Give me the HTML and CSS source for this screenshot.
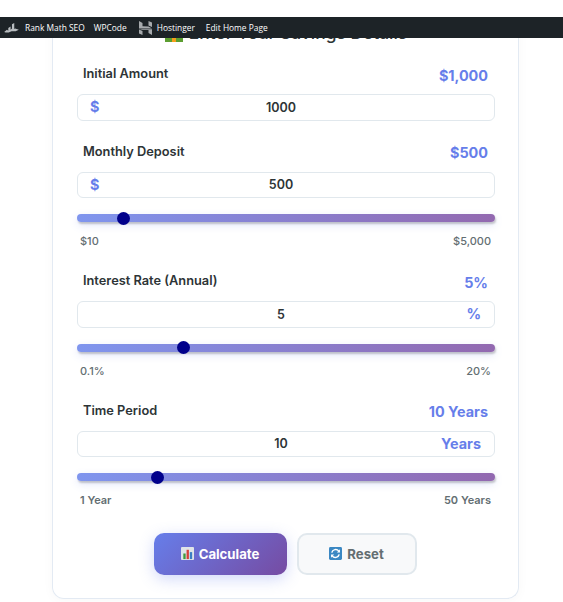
FILE: index.html
```html
<!DOCTYPE html>
<html lang="en">
<head>
<meta charset="utf-8">
<title>Savings Calculator</title>
<link rel="stylesheet" href="styles.css">
</head>
<body>
<header class="adminbar">
  <nav class="adminbar__inner">
    <svg class="adminbar__logo" viewBox="0 0 16 12" width="15" height="11"><path d="M0 11 3 8.5 4.5 9.5V6.5L7 5v3.5L8.5 7V2.5L11 1v6.5L12 7l4 1.5-3.5 1.5H8L5 11.5H1.5z" fill="#b9bdc0"/></svg>
    <a class="adminbar__link">Rank Math SEO</a>
    <a class="adminbar__link adminbar__link--wp">WPCode</a>
    <svg class="adminbar__h" viewBox="0 0 13 14" width="13" height="14"><path d="M0 0 3.5 2V5.3L9.5 5.5 13 7.5H0zM9.5 0 13 1.5V6L9.5 4.5zM0 8.5 3.5 10V14L0 12.5zM0 8.3H13V14L9.5 12V9H3.5z" fill="#a7aaad"/></svg>
    <a class="adminbar__link">Hostinger</a>
    <a class="adminbar__link adminbar__link--edit">Edit Home Page</a>
  </nav>
</header>
<main class="card">
  <h2 class="card__title">
    <svg class="card__emoji" viewBox="0 0 18 18" width="18" height="18"><rect width="18" height="18" fill="#5c9e31"/><rect x="7" y="10" width="4" height="8" fill="#f59e1b"/></svg>
    Enter Your Savings Details
  </h2>

  <section class="field field--first">
    <div class="field__head"><label class="field__label">Initial Amount</label><span class="field__value">$1,000</span></div>
    <div class="entry"><span class="entry__unit entry__unit--left">$</span><input class="entry__input" type="text" value="1000"></div>
  </section>

  <section class="field field--deposit">
    <div class="field__head"><label class="field__label">Monthly Deposit</label><span class="field__value">$500</span></div>
    <div class="entry"><span class="entry__unit entry__unit--left">$</span><input class="entry__input" type="text" value="500"></div>
    <input class="slider" type="range" min="10" max="5000" value="500">
    <div class="scale"><span>$10</span><span>$5,000</span></div>
  </section>

  <section class="field">
    <div class="field__head"><label class="field__label">Interest Rate (Annual)</label><span class="field__value">5%</span></div>
    <div class="entry"><input class="entry__input" type="text" value="5"><span class="entry__unit entry__unit--right">%</span></div>
    <input class="slider" type="range" min="0.1" max="20" step="0.1" value="5">
    <div class="scale"><span>0.1%</span><span>20%</span></div>
  </section>

  <section class="field">
    <div class="field__head"><label class="field__label">Time Period</label><span class="field__value">10 Years</span></div>
    <div class="entry"><input class="entry__input" type="text" value="10"><span class="entry__unit entry__unit--right">Years</span></div>
    <input class="slider" type="range" min="1" max="50" value="10">
    <div class="scale scale--strong"><span>1 Year</span><span>50 Years</span></div>
  </section>

  <div class="actions">
    <button class="btn btn--primary" type="button">
      <svg viewBox="0 0 14 14" width="13" height="13"><rect width="14" height="14" rx="1" fill="#dfe5e8"/><rect x="2.5" y="7" width="2.5" height="6" fill="#3f9a3f"/><rect x="6" y="3" width="2.5" height="10" fill="#d9413a"/><rect x="9.5" y="5.5" width="2.5" height="7.5" fill="#3b7fc4"/></svg>
      Calculate
    </button>
    <button class="btn btn--ghost" type="button">
      <svg viewBox="0 0 14 14" width="13" height="13"><rect width="14" height="14" rx="1.5" fill="#3b88c3"/><path d="M3 6A4.2 4.2 0 0 1 10.5 4.5M11 8A4.2 4.2 0 0 1 3.5 9.5" fill="none" stroke="#fff" stroke-width="1.6"/><path d="M11.8 2.5V6H8.5zM2.2 11.5V8H5.5z" fill="#fff"/></svg>
      Reset
    </button>
  </div>
</main>
</body>
</html>
```
FILE: styles.css
```css
* { box-sizing: border-box; }
html, body { margin: 0; background: #fff; }
body { font-family: Inter, "Liberation Sans", sans-serif; color: #2d3436; height: 602px; overflow: hidden; }

.adminbar { position: absolute; top: 0; left: 0; right: 0; height: 38px; padding-top: 17px; background: #fff; z-index: 5; }
.adminbar__inner { display: flex; align-items: center; height: 21px; background: #1d2327; padding-left: 4px; font: 8.4px/21px "Open Sans", "Liberation Sans", sans-serif; color: #fff; }
.adminbar__logo { margin-right: 6px; }
.adminbar__link--wp { margin-left: 9px; }
.adminbar__h { margin: 0 5px 0 12px; }
.adminbar__link--edit { margin-left: 11px; }

.card { width: 467px; margin: 0 0 0 52px; padding: 20px 23px 22px 24px; height: 599px; border: 1px solid #e3eaf3; border-top: 0; border-radius: 12px; box-shadow: 0 2px 12px rgba(0, 0, 0, .03); }
.card__title { margin: 0; display: flex; justify-content: center; align-items: center; gap: 6px; height: 26px; font-size: 17.4px; font-weight: 500; line-height: 26px; }

.field { margin-top: 21px; }
.field--first { margin-top: 16px; }
.field--deposit { margin-top: 19px; }
.field__head { display: flex; justify-content: space-between; align-items: flex-end; padding: 0 7px 0 6px; height: 24px; margin-bottom: 8px; }
.field__label { font-size: 12.8px; font-weight: 600; line-height: 16px; margin-bottom: 4px; color: #2d3436; }
.field__value { font-size: 14.4px; font-weight: 700; line-height: 20px; margin-bottom: .5px; color: #667eea; }
.entry { position: relative; height: 26.5px; }
.entry__input { display: block; width: 100%; height: 100%; padding: 0 15px 0 5px; border: 1px solid #e1e8ed; border-radius: 6px; background: #fff; font: 600 12.5px Inter, sans-serif; color: #2d3436; text-align: center; }
.entry__unit { position: absolute; top: calc(50% - 1px); transform: translateY(-50%); font-size: 14.4px; font-weight: 700; color: #667eea; }
.entry__unit--left { left: 13px; }
.entry__unit--right { right: 14px; }

.slider { display: block; appearance: none; -webkit-appearance: none; width: 100%; height: 8px; margin: 16px 0 0; border-radius: 4px; background: linear-gradient(90deg, #7f95ee, #9268b0); box-shadow: 1px 2px 2px rgba(0,0,0,.2), 0 3px 8px rgba(102,126,234,.2); }
.slider::-webkit-slider-thumb { -webkit-appearance: none; appearance: none; width: 13px; height: 13px; border-radius: 50%; background: #00008b; border: 0; }

.scale { display: flex; justify-content: space-between; padding: 0 4px 0 3px; margin-top: 12px; font-size: 11px; font-weight: 500; line-height: 14px; color: #636e72; }
.scale--strong { font-weight: 600; }

.actions { display: flex; justify-content: center; gap: 10px; margin-top: 25.5px; padding-right: 2px; }
.btn { display: flex; align-items: center; justify-content: center; gap: 5px; height: 42px; border-radius: 10px; font: 700 13.2px Inter, sans-serif; }
.btn--primary { width: 133px; border: 0; color: #fff; background: linear-gradient(135deg, #667eea, #764ba2); box-shadow: 0 4px 15px rgba(102,126,234,.3); }
.btn--ghost { width: 120px; border: 2px solid #e1e8ed; color: #636e72; background: #f8f9fa; }
```
